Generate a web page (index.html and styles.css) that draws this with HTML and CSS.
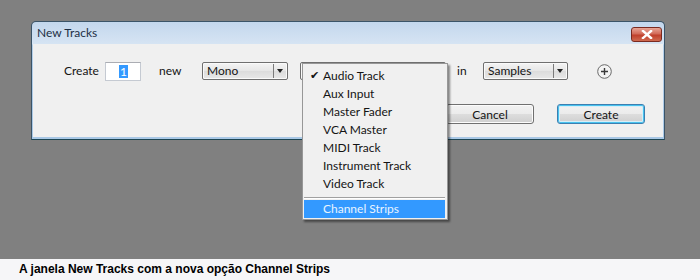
FILE: index.html
```html
<!DOCTYPE html>
<html>
<head>
<meta charset="utf-8">
<link rel="stylesheet" href="styles.css">
</head>
<body>
<div class="stage">
  <div class="dialog">
    <div class="titlebar">
      <span class="title">New Tracks</span>
      <button class="close" aria-label="Close">
        <svg width="12" height="9" viewBox="0 0 12 9"><path d="M2 1 L10 8 M10 1 L2 8" stroke="#fff" stroke-width="2.4" stroke-linecap="square"/></svg>
      </button>
    </div>
    <div class="client">
      <div class="row">
        <span class="lbl lbl-create">Create</span>
        <span class="input"><span class="sel">1</span></span>
        <span class="lbl lbl-new">new</span>
        <span class="select select-mono"><span class="sv">Mono</span><span class="arrow"></span></span>
        <span class="select select-type"><span class="sv"></span><span class="arrow"></span></span>
        <span class="lbl lbl-in">in</span>
        <span class="select select-samples"><span class="sv">Samples</span><span class="arrow"></span></span>
        <span class="plus">
          <svg width="15" height="15" viewBox="0 0 15 15"><circle cx="7.5" cy="7.5" r="6.8" fill="#f4f4f4" stroke="#6a6a6a" stroke-width="1"/><path d="M7.5 4 V11 M4 7.5 H11" stroke="#3a3a3a" stroke-width="1.4"/></svg>
        </span>
      </div>
      <div class="buttons">
        <button class="btn">Cancel</button>
        <button class="btn btn-default">Create</button>
      </div>
    </div>
    <div class="menu">
      <div class="item"><span class="check">✔</span>Audio Track</div>
      <div class="item">Aux Input</div>
      <div class="item">Master Fader</div>
      <div class="item">VCA Master</div>
      <div class="item">MIDI Track</div>
      <div class="item">Instrument Track</div>
      <div class="item">Video Track</div>
      <div class="sep"></div>
      <div class="item item-hl">Channel Strips</div>
    </div>
  </div>
</div>
<div class="caption">A janela New Tracks com a nova opção Channel Strips</div>
</body>
</html>
```

FILE: styles.css
```css
html, body {
  margin: 0;
  padding: 0;
}
body {
  width: 700px;
  height: 280px;
  background: #808080;
  font-family: Lato, "Noto Sans", sans-serif;
  font-size: 12px;
  color: #141414;
  overflow: hidden;
}
.stage {
  height: 259px;
  box-sizing: border-box;
  padding: 21px 0 0 31px;
}
.dialog {
  position: relative;
  width: 634px;
  height: 119px;
  box-sizing: border-box;
  border: 1px solid #3b5468;
  border-bottom-color: #1d4552;
  border-radius: 5px 5px 0 0;
  background: linear-gradient(#c3d7ed, #d6e4f3 22px, #b6d0ea 23px, #a9c8e6);
  display: flex;
  flex-direction: column;
}
.titlebar {
  height: 22px;
  flex: none;
  display: flex;
  align-items: center;
  justify-content: space-between;
  padding: 0 2px 0 5px;
}
.title {
  font-size: 12px;
  color: #1e2f45;
  margin-top: -1px;
}
.close {
  width: 31px;
  height: 15px;
  margin-top: 2px;
  padding: 0;
  border: 1px solid #7a2a20;
  border-radius: 3px;
  background: linear-gradient(#e8a596, #d26a58 45%, #c0402c 55%, #cf6a50);
  display: flex;
  align-items: center;
  justify-content: center;
}
.client {
  flex: 1;
  margin: 0 1px 2px 1px;
  background: #f0f0f0;
  padding: 18px 0 0 31px;
  box-sizing: border-box;
}
.row {
  display: flex;
  align-items: center;
  height: 18px;
}
.lbl {
  flex: none;
  line-height: 18px;
}
.lbl-create { width: 41px; }
.lbl-new { width: 43px; margin-left: 18px; }
.lbl-in { width: 26px; margin-left: 11px; }
.input {
  flex: none;
  width: 36px;
  height: 19px;
  box-sizing: border-box;
  background: #fff;
  border: 1px solid #c5cad2;
  border-top-color: #abadb3;
  padding: 2px 0 0 13px;
  line-height: 13px;
}
.sel {
  display: inline-block;
  background: #3399ff;
  color: #fff;
  padding: 0 1px;
  height: 13px;
}
.select {
  flex: none;
  height: 18px;
  box-sizing: border-box;
  border: 1px solid #6f6f6f;
  border-radius: 2px;
  background: linear-gradient(#f4f4f4, #e6e6e6 50%, #dcdcdc 51%, #e8e8e8);
  display: flex;
  align-items: center;
  position: relative;
  box-shadow: inset 0 0 0 1px #fafafa;
}
.sv {
  flex: 1;
  padding-left: 4px;
  line-height: 16px;
}
.arrow {
  width: 12px;
  height: 14px;
  border-left: 1px solid #7a7a7a;
  margin-right: 1px;
  position: relative;
}
.arrow::after {
  content: "";
  position: absolute;
  left: 3px;
  top: 5px;
  border-left: 3.5px solid transparent;
  border-right: 3.5px solid transparent;
  border-top: 4px solid #222;
}
.select-mono { width: 86px; }
.select-type { width: 146px; margin-left: 12px; }
.select-samples { width: 85px; }
.plus {
  flex: none;
  margin-left: 29px;
  width: 15px;
  height: 15px;
  display: flex;
}
.buttons {
  display: flex;
  justify-content: flex-end;
  gap: 23px;
  margin-top: 24px;
  padding-right: 18px;
}
.btn {
  width: 88px;
  height: 20px;
  box-sizing: border-box;
  padding: 0;
  border: 1px solid #707070;
  border-radius: 3px;
  background: linear-gradient(#f2f2f2, #ebebeb 50%, #dddddd 51%, #cfcfcf);
  box-shadow: inset 0 0 0 1px #fcfcfc;
  font-family: Lato, "Noto Sans", sans-serif;
  font-size: 12px;
  color: #141414;
  line-height: 17px;
}
.btn-default {
  border-color: #3c7fb1;
  box-shadow: inset 0 0 0 1px #48c2ee, inset 0 0 0 2px #d5eef8;
}
.menu {
  position: absolute;
  left: 270px;
  top: 41px;
  width: 146px;
  height: 157px;
  box-sizing: border-box;
  background: #f0f0f0;
  border: 1px solid #979797;
  padding: 3px 2px 1px 1px;
  box-shadow: 2px 2px 2px rgba(0, 0, 0, 0.45);
}
.item {
  height: 18px;
  line-height: 18px;
  padding-left: 19px;
  position: relative;
  white-space: nowrap;
}
.check {
  position: absolute;
  left: 6px;
  top: 0;
  font-family: "DejaVu Sans", sans-serif;
  font-size: 11px;
}
.sep {
  margin: 4px 0 1px 0;
  border-top: 1px solid #a0a0a0;
  border-bottom: 1px solid #ffffff;
  height: 0;
}
.item-hl {
  background: #3399ff;
  color: #e8f4ff;
}
.caption {
  height: 21px;
  background: #f6f6f8;
  font-family: "Liberation Sans", Arial, sans-serif;
  font-weight: bold;
  font-size: 12px;
  color: #000;
  padding-left: 19px;
  line-height: 21px;
}
```
